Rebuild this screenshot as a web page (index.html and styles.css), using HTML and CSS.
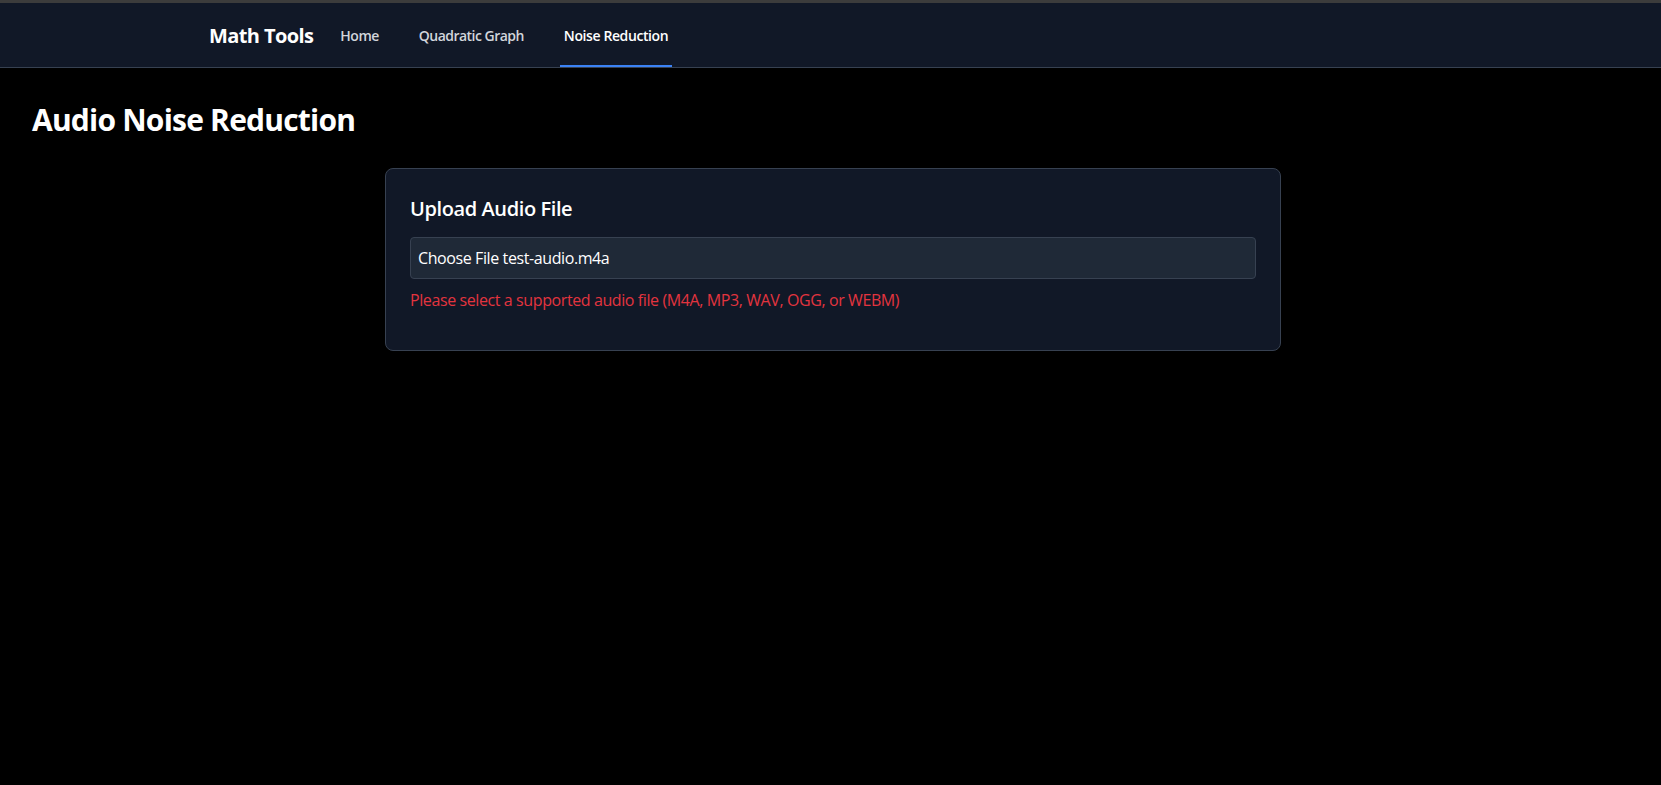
FILE: index.html
```html
<!DOCTYPE html>
<html lang="en">
<head>
<meta charset="utf-8">
<title>Audio Noise Reduction</title>
<link rel="stylesheet" href="styles.css">
</head>
<body>
<div class="topbar"></div>
<nav class="nav">
  <div class="nav-inner">
    <span class="brand">Math Tools</span>
    <div class="links">
      <a class="link">Home</a>
      <a class="link">Quadratic Graph</a>
      <a class="link active">Noise Reduction</a>
    </div>
  </div>
</nav>
<main class="main">
  <h1 class="title">Audio Noise Reduction</h1>
  <div class="card-wrap">
    <section class="card">
      <h2 class="card-title">Upload Audio File</h2>
      <div class="file-input">Choose File test-audio.m4a</div>
      <p class="error">Please select a supported audio file (M4A, MP3, WAV, OGG, or WEBM)</p>
    </section>
  </div>
</main>
</body>
</html>
```
FILE: styles.css
```css
* { box-sizing: border-box; }
html, body { margin: 0; padding: 0; }
body {
  background: #000;
  color: #fff;
  font-family: "Open Sans", "Noto Sans", sans-serif;
  min-height: 100vh;
}
.topbar { height: 3px; background: #3c3c3c; }
.nav {
  background: #111827;
  border-bottom: 1px solid #374151;
}
.nav-inner {
  max-width: 1280px;
  margin: 0 auto;
  padding: 0 13.5px 0 18.5px;
  height: 64px;
  display: flex;
  align-items: stretch;
}
.brand {
  display: flex;
  align-items: center;
  font-size: 20px;
  font-weight: 700;
  letter-spacing: -0.6px;
}
.links {
  display: flex;
  gap: 32px;
  margin-left: 23px;
}
.link {
  display: flex;
  align-items: center;
  padding: 2px 4px 0;
  border-bottom: 2px solid transparent;
  font-size: 14px;
  font-weight: 600;
  color: #d1d5db;
  letter-spacing: -0.52px;
}
.link.active { color: #fff; border-bottom-color: #3b82f6; letter-spacing: -0.4px; }
.main { padding: 34px 32px; }
.title {
  margin: 0 0 30px;
  font-size: 30px;
  line-height: 36px;
  font-weight: 700;
  letter-spacing: -0.78px;
}
.card-wrap { padding-left: 5px; }
.card {
  max-width: 896px;
  margin: 0 auto;
  background: #111827;
  border: 1px solid #374151;
  border-radius: 8px;
  padding: 26px 24px 38px;
}
.card-title {
  margin: 0 0 14px;
  font-size: 20px;
  line-height: 28px;
  font-weight: 600;
  letter-spacing: -0.4px;
}
.file-input {
  background: #1f2937;
  border: 1px solid #374151;
  border-radius: 4px;
  padding: 8px 7px;
  font-size: 16px;
  line-height: 24px;
  letter-spacing: -0.4px;
}
.error {
  margin: 9px 0 0;
  font-size: 16px;
  line-height: 24px;
  color: #e3343f;
  letter-spacing: -0.4px;
}
```
